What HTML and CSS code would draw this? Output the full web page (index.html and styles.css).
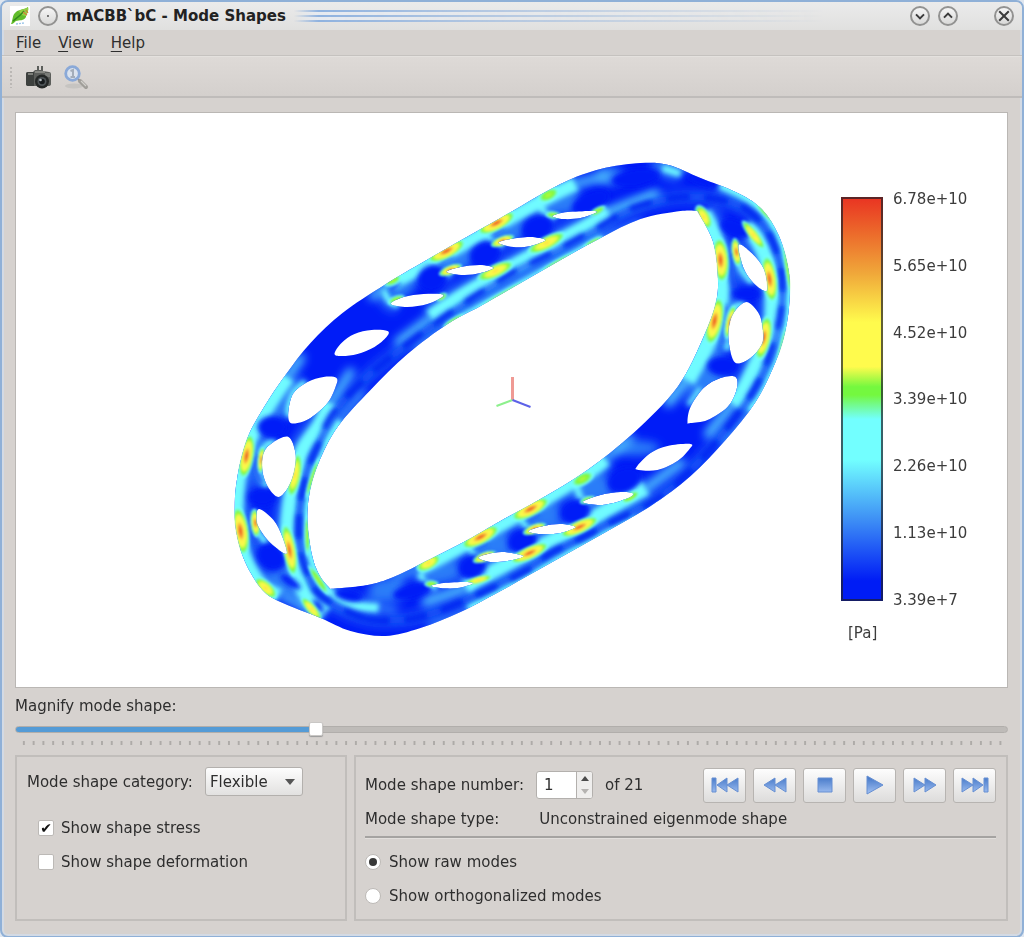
FILE: index.html
```html
<!DOCTYPE html>
<html lang="en">
<head>
<meta charset="utf-8">
<title>mACBB`bC - Mode Shapes</title>
<link rel="stylesheet" href="styles.css">
</head>
<body>
<div class="window">
  <header class="titlebar">
    <svg class="app-icon" viewBox="0 0 20 20" aria-hidden="true">
      <rect width="20" height="20" fill="#fff"/>
      <path d="M1 18C3 14 2 9 6 6C9 3 14 4 18 1C19 6 16 8 16 11C14 15 9 14 6 15C4 16 4 18 1 18Z" fill="#62bd2c"/>
      <path d="M9 5C12 3 16 3 18 1C19 5 17 7 16 10C13 10 10 8 9 5Z" fill="#93cf45"/>
      <path d="M3 15C7 12 10 10 14 5" fill="none" stroke="#2f8a1c" stroke-width="1.3"/>
      <path d="M13 6L17 9M16 4L18 7" stroke="#d0803a" stroke-width="1.2"/>
      <path d="M6 18L14 17" stroke="#9fc8ea" stroke-width="1.4" stroke-dasharray="2 1"/>
    </svg>
    <button class="round" type="button" aria-label="Window menu"><svg viewBox="0 0 20 20"><circle cx="10" cy="10" r="1.3" fill="#555"/></svg></button>
    <h1 class="title">mACBB`bC - Mode Shapes</h1>
    <span class="stripes"></span>
    <button class="round" type="button" aria-label="Minimize"><svg viewBox="0 0 20 20"><path d="M5 8L10 13L15 8" class="glyph"/></svg></button>
    <button class="round" type="button" aria-label="Maximize"><svg viewBox="0 0 20 20"><path d="M5 12L10 7L15 12" class="glyph"/></svg></button>
    <button class="round close" type="button" aria-label="Close"><svg viewBox="0 0 20 20"><path d="M4 4L16 16M16 4L4 16" class="glyph"/></svg></button>
  </header>

  <nav class="menubar">
    <button type="button"><u>F</u>ile</button>
    <button type="button"><u>V</u>iew</button>
    <button type="button"><u>H</u>elp</button>
  </nav>

  <div class="toolbar">
    <span class="grip"></span>
    <button type="button" aria-label="Take snapshot">
      <svg width="26" height="26" viewBox="0 0 26 26">
        <path d="M1 10Q1 8 3 8H8L10 6H12V2H14V6H16V2H18V7L24 8Q26 8 26 10V20Q26 22 23 22H4Q1 22 1 20Z" fill="#5c5e5b"/>
        <path d="M1 10Q1 8 3 8H9V22H4Q1 22 1 20Z" fill="#3d403e"/>
        <path d="M3 10H8M10 8H20" stroke="#92948f" stroke-width="1.500"/>
        <rect x="20" y="9" width="5" height="4" fill="#7b7d79"/>
        <circle cx="17" cy="17.500" r="7" fill="#252827"/>
        <circle cx="17" cy="17.500" r="4.500" fill="#4e5457"/>
        <circle cx="17" cy="17.500" r="2.800" fill="#161a1c"/>
        <circle cx="15.500" cy="16" r="1.300" fill="#b4bcc0"/>
      </svg>
    </button>
    <button type="button" aria-label="Zoom to original size">
      <svg width="26" height="26" viewBox="0 0 26 26">
        <ellipse cx="11" cy="22" rx="9" ry="2.500" fill="#c6c4c1"/>
        <path d="M15 15L18 18" stroke="#888" stroke-width="2"/>
        <path d="M17 17L23 23" stroke="#a09e99" stroke-width="4" stroke-linecap="round"/>
        <path d="M18 17L23 22" stroke="#d2d0cc" stroke-width="1.300"/>
        <circle cx="9.500" cy="9.500" r="6.800" fill="#dbe3ee" stroke="#8aa9d8" stroke-width="2.800"/>
        <path d="M7.500 7L10 6V13M7.500 13H12" fill="none" stroke="#a3adba" stroke-width="2"/>
      </svg>
    </button>
  </div>

  <main class="content">
    <section class="viewport">
      <svg class="model" viewBox="16 113 814 574" role="img" aria-label="Stress on deformed ring">
        <defs>
          <clipPath id="body"><path id="outline" clip-rule="evenodd"/></clipPath>
          <filter id="soft" x="-20%" y="-20%" width="140%" height="140%"><feGaussianBlur stdDeviation="2.500"/></filter>
          <filter id="wide" x="-20%" y="-20%" width="140%" height="140%"><feGaussianBlur stdDeviation="5"/></filter>
          <filter id="slight" x="-20%" y="-20%" width="140%" height="140%"><feGaussianBlur stdDeviation="0.800"/></filter>
          <radialGradient id="red">
            <stop offset="0" stop-color="#ee4a22"/><stop offset=".2" stop-color="#f39232"/>
            <stop offset=".38" stop-color="#fdf54a"/><stop offset=".58" stop-color="#f4fb4c"/>
            <stop offset=".74" stop-color="#7cf83c"/><stop offset=".9" stop-color="#72ffff" stop-opacity=".9"/>
            <stop offset="1" stop-color="#72ffff" stop-opacity="0"/>
          </radialGradient>
          <radialGradient id="yellow">
            <stop offset="0" stop-color="#fbd63f"/><stop offset=".25" stop-color="#fff94b"/>
            <stop offset=".5" stop-color="#e8fb4a"/><stop offset=".7" stop-color="#7cf83c"/>
            <stop offset=".9" stop-color="#72ffff" stop-opacity=".9"/><stop offset="1" stop-color="#72ffff" stop-opacity="0"/>
          </radialGradient>
          <radialGradient id="green">
            <stop offset="0" stop-color="#b9f83c"/><stop offset=".5" stop-color="#7cf83c"/>
            <stop offset=".8" stop-color="#72ffff" stop-opacity=".9"/><stop offset="1" stop-color="#72ffff" stop-opacity="0"/>
          </radialGradient>
        </defs>
        <g clip-path="url(#body)">
          <rect x="220" y="150" width="590" height="500" fill="#001cf7"/>
          <g id="haze" class="haze" filter="url(#wide)"></g>
          <g id="fade" class="fade" filter="url(#wide)"></g>
          <g id="cyan" class="cyan" filter="url(#soft)"></g>
          <g id="dark" filter="url(#soft)"></g>
          <g id="spots" filter="url(#slight)"></g>
        </g>
        <path d="M512 377V401" stroke="#ef9a94" stroke-width="3"/>
        <path d="M512 400L496 406" stroke="#8df08d" stroke-width="2"/>
        <path d="M512 400L530 407" stroke="#5d62e8" stroke-width="2"/>
      </svg>
      <div class="legend">
        <div class="scale"></div>
        <ol class="values">
          <li>6.78e+10</li><li>5.65e+10</li><li>4.52e+10</li><li>3.39e+10</li><li>2.26e+10</li><li>1.13e+10</li><li>3.39e+7</li>
        </ol>
        <span class="unit">[Pa]</span>
      </div>
    </section>

    <label class="magnify" for="magnify">Magnify mode shape:</label>
    <input class="slider" id="magnify" type="range" min="0" max="100" value="30">
    <div class="ticks"></div>

    <div class="panels">
      <section class="panel category">
        <div class="row">
          <label for="category">Mode shape category:</label>
          <span class="select">
            <select id="category"><option>Flexible</option><option>Rigid</option></select>
            <svg class="arrow" width="10" height="6" viewBox="0 0 10 6"><path d="M0 0H10L5 6Z" fill="#555"/></svg>
          </span>
        </div>
        <label class="check"><input type="checkbox" checked>Show shape stress</label>
        <label class="check"><input type="checkbox">Show shape deformation</label>
      </section>

      <section class="panel shape">
        <div class="row player">
          <label for="number">Mode shape number:</label>
          <span class="spin">
            <input id="number" type="number" min="1" max="21" value="1">
            <span class="steps">
              <button type="button" aria-label="Next mode"><svg width="8" height="5" viewBox="0 0 8 5"><path d="M0 5H8L4 0Z" fill="#4b4b4b"/></svg></button>
              <button type="button" aria-label="Previous mode"><svg width="8" height="5" viewBox="0 0 8 5"><path d="M0 0H8L4 5Z" fill="#b5b3b1"/></svg></button>
            </span>
          </span>
          <span>of 21</span>
          <div class="buttons">
            <button type="button" aria-label="First"><svg viewBox="0 0 28 20"><defs><linearGradient id="ink" gradientUnits="userSpaceOnUse" x1="0" y1="2" x2="0" y2="18"><stop offset="0" stop-color="#4578c8"/><stop offset="1" stop-color="#9dbdf0"/></linearGradient></defs><path class="ink" d="M1 3H5V17H1ZM16 3V17L6 10ZM27 3V17L16 10Z"/></svg></button>
            <button type="button" aria-label="Rewind"><svg viewBox="0 0 28 20"><path class="ink" d="M14 3V17L3 10ZM25 3V17L14 10Z"/></svg></button>
            <button type="button" aria-label="Stop"><svg viewBox="0 0 28 20"><path class="ink" d="M7 3H21V17H7Z"/></svg></button>
            <button type="button" aria-label="Play"><svg viewBox="0 0 28 20"><path class="ink" d="M6 1V19L22 10Z"/></svg></button>
            <button type="button" aria-label="Forward"><svg viewBox="0 0 28 20"><path class="ink" d="M3 3V17L14 10ZM14 3V17L25 10Z"/></svg></button>
            <button type="button" aria-label="Last"><svg viewBox="0 0 28 20"><path class="ink" d="M1 3V17L12 10ZM12 3V17L22 10ZM23 3H27V17H23Z"/></svg></button>
          </div>
        </div>
        <div class="row type"><span>Mode shape type:</span><span>Unconstrained eigenmode shape</span></div>
        <hr>
        <label class="radio"><input type="radio" name="modes" checked>Show raw modes</label>
        <label class="radio"><input type="radio" name="modes">Show orthogonalized modes</label>
      </section>
    </div>
  </main>
</div>
<script src="model.js"></script>
</body>
</html>
```
FILE: styles.css
```css
* { box-sizing: border-box; }
body {
  margin: 0;
  background: #dfe6ef;
  color: #2e2e2e;
  font: 15px/18px "DejaVu Sans", sans-serif;
}
button, input, select { font: inherit; color: inherit; margin: 0; }
button { padding: 0; border: 0; background: none; }
svg { display: block; }

.window {
  display: flex;
  flex-direction: column;
  min-height: 100vh;
  border: 2px solid #8fb0d7;
  border-radius: 8px;
  box-shadow: inset 0 0 0 2px #d3dae4;
  background: #d6d2cf;
  overflow: hidden;
}

.titlebar {
  display: flex;
  align-items: center;
  height: 28px;
  gap: 8px;
  padding: 0 8px;
  background: linear-gradient(#ebebeb, #e0e0df);
}
.app-icon { width: 20px; height: 20px; }
.round {
  width: 20px;
  height: 20px;
  border: 2px solid #929291;
  border-radius: 50%;
  background: linear-gradient(#f5f5f5, #d9d9d8);
  flex: none;
}
.round svg { width: 100%; height: 100%; }
.round.close { margin-left: 28px; }
.glyph { fill: none; stroke: #3b3b3b; stroke-width: 2.5; }
.title { margin: 0; font-size: 15px; line-height: 18px; font-weight: bold; color: #222; white-space: nowrap; }
.stripes {
  flex: 1;
  height: 12px;
  margin-right: 4px;
  background: repeating-linear-gradient(#8fb2df 0 2px, #e6eaf0 2px 5px);
  mask-image: linear-gradient(90deg, transparent, #000 4%, rgba(0, 0, 0, .6) 30%, transparent 88%);
}

.menubar {
  display: flex;
  gap: 17px;
  height: 26px;
  padding: 0 14px;
  border-bottom: 1px solid #c5c2bf;
}
.menubar u { text-underline-offset: 3px; }

.toolbar {
  display: flex;
  align-items: center;
  gap: 12px;
  height: 42px;
  padding: 0 7px;
  border-top: 1px solid #e4e1de;
  border-bottom: 2px solid #bfbcba;
  background: linear-gradient(#dedad7, #d4d0cd);
}
.grip { width: 4px; height: 22px; background: radial-gradient(circle, #bbb8b5 1px, transparent 1px) 0 0 / 4px 4px; }

.content { display: flex; flex: 1; flex-direction: column; padding: 14px 14px 15px 13px; }

.viewport {
  display: flex;
  flex: 1;
  min-height: 320px;
  border: 1px solid #bab7b4;
  background: #fff;
}
.model { flex: 1; min-width: 0; height: 574px; }
.legend {
  display: grid;
  grid-template-columns: 42px 96px;
  grid-template-rows: 404px 20px;
  column-gap: 10px;
  row-gap: 23px;
  padding: 84px 18px 0 10px;
  color: #3c3c3c;
}
.scale {
  border: 2px solid rgba(30, 30, 40, .7);
  background: linear-gradient(#e93322, #ec6a2b 9%, #f0a83a 19%, #fffb4d 31%, #fffb4d 42%, #74f83f 47%, #74f83f 49%, #72ffff 55%, #72ffff 65%, #3d8ef5 80%, #001cf5 95%) border-box;
}
.values {
  display: flex;
  flex-direction: column;
  justify-content: space-between;
  margin: -7px 0 -8px;
  padding: 0;
  list-style: none;
}
.unit { padding-left: 7px; }

.magnify { margin-top: 9px; }
.slider {
  appearance: none;
  width: 100%;
  height: 16px;
  margin-top: 6px;
  background: none;
}
.slider::-webkit-slider-runnable-track {
  height: 7px;
  border: 1px solid #b1aeab;
  border-radius: 4px;
  background: linear-gradient(90deg, #549bd6 30%, #bebbb8 30%) border-box;
}
.slider::-webkit-slider-thumb {
  appearance: none;
  width: 14px;
  height: 14px;
  margin-top: -5px;
  border: 1px solid #c9c7c5;
  border-radius: 2px;
  background: #fff;
  box-shadow: 0 1px 1px #999;
}
.ticks {
  height: 4px;
  margin: 4px 3px 10px;
  background: linear-gradient(90deg, transparent 50%, #aeaba8 50% 70%, transparent 70%) 0 0 / calc(100% / 101) 100%;
}

.panels { display: grid; grid-template-columns: 332px 1fr; gap: 7px; }
.panel { min-height: 166px; border: 2px solid #c1bebb; }
.row { display: flex; align-items: center; gap: 12px; }
.category { padding: 10px; }
.category .row { margin-bottom: 23px; }
.select { position: relative; }
.select select {
  appearance: none;
  width: 98px;
  height: 29px;
  padding: 0 4px;
  border: 1px solid #b3b0ad;
  border-radius: 3px;
  background: linear-gradient(#fdfdfd, #e2e1e0);
}
.arrow { position: absolute; right: 8px; top: 12px; pointer-events: none; }
.check { display: flex; align-items: center; gap: 7px; height: 18px; margin: 0 0 16px 11px; }
.check input, .radio input {
  appearance: none;
  display: grid;
  place-items: center;
  width: 16px;
  height: 16px;
  border: 1px solid #bcb9b6;
  border-radius: 2px;
  background: #fff;
}
.check input:checked::after { content: "✔"; color: #111; font-size: 14px; line-height: 14px; }

.shape { padding: 11px 10px 0 9px; }
.player { height: 34px; }
.spin {
  display: flex;
  height: 28px;
  border: 1px solid #b3b0ad;
  border-radius: 3px;
  background: #fff;
  overflow: hidden;
}
.spin input { width: 39px; padding: 0 7px; border: 0; background: none; appearance: textfield; }
.spin input::-webkit-inner-spin-button { display: none; }
.steps { display: grid; width: 16px; border-left: 1px solid #b3b0ad; background: #efeeed; }
.steps button { display: grid; place-items: center; }
.buttons { display: flex; gap: 7px; margin-left: auto; }
.buttons button {
  display: grid;
  place-items: center;
  width: 43px;
  height: 35px;
  border: 1px solid #b7b4b1;
  border-radius: 3px;
  background: linear-gradient(#fdfdfd, #dddcdb);
}
.buttons svg { width: 28px; height: 20px; }
.ink { fill: url(#ink); stroke: #668fd2; stroke-width: 1; }
.type { gap: 40px; margin: 8px 0; }
.shape hr { margin: 0 0 14px; border: 0; border-top: 2px solid #a5a3a1; border-bottom: 1px solid #e2dfdc; }
.radio { display: flex; align-items: center; gap: 8px; height: 18px; }
.radio + .radio { margin: 16px 0 14px; }
.radio input { border-radius: 50%; }
.radio input:checked::after { content: ""; width: 8px; height: 8px; border-radius: 50%; background: #383838; }

.haze { fill: #2b7df8; stroke: #2b7df8; }
.haze path { fill: none; }
.fade { fill: none; stroke: #55cdfc; stroke-linecap: round; }
.cyan { fill: none; stroke: #70fbff; }
```
FILE: model.js
```js
const NS = "http://www.w3.org/2000/svg";

function pairs(text) {
  return text.trim().split(/\s+/).map(p => p.split(",").map(Number));
}

// Catmull-Rom spline through the points, as a cubic path.
function spline(text, closed) {
  const p = pairs(text);
  const n = p.length;
  const at = i => closed ? p[(i + n) % n] : p[Math.max(0, Math.min(n - 1, i))];
  let d = "M" + p[0];
  for (let i = 0; i < (closed ? n : n - 1); i++) {
    const [a, b, c, e] = [at(i - 1), at(i), at(i + 1), at(i + 2)];
    d += `C${b[0] + (c[0] - a[0]) / 6},${b[1] + (c[1] - a[1]) / 6} ${c[0] - (e[0] - b[0]) / 6},${c[1] - (e[1] - b[1]) / 6} ${c}`;
  }
  return closed ? d + "Z" : d;
}

function add(parent, tag, attrs) {
  const el = document.createElementNS(NS, tag);
  for (const key in attrs) el.setAttribute(key, attrs[key]);
  document.getElementById(parent).append(el);
}

const loops = [
  "234,510 237,476 247,438 263,408 285,375 310,343 342,313 384,285 440,252 500,218 560,184 600,169 640,163 668,165 700,178 735,192 760,208 778,235 788,270 789,300 785,330 775,362 755,402 725,440 690,476 650,506 600,535 550,563 500,591 460,612 420,628 385,636 350,631 320,618 280,602 262,590 246,565 237,538",
  "289,422 288,410 293,393 307,382 323,377 336,378 335,387 327,403 310,418 297,423",
  "334,354 341,343 354,334 371,330 387,331 386,337 374,347 357,354 342,356",
  "288,437 295,453 294,470 288,487 278,497 268,488 262,472 263,453 273,442",
  "259,509 273,520 282,537 286,554 270,543 258,527 256,516",
  "390,304 403,297 423,294 440,294 442,297 427,304 407,307",
  "446,272 460,267 480,265 493,268 480,273 463,275",
  "498,243 510,239 530,237 545,240 530,246 513,247",
  "552,216 567,212 593,211 595,213 580,218 563,219",
  "430,586 443,583 467,582 472,584 457,588 440,588",
  "478,558 487,554 503,552 523,556 507,561 490,562",
  "528,531 543,526 560,524 575,527 560,533 540,534",
  "582,502 600,495 620,492 632,493 630,497 613,503 597,505",
  "636,467 650,453 667,446 690,444 689,449 677,461 657,470 638,470",
  "687,422 690,407 703,388 720,378 735,377 736,390 727,407 707,420 690,423",
  "735,363 729,347 728,330 733,313 746,302 758,313 762,327 762,343 750,358",
  "738,245 750,252 763,268 767,287 764,291 753,283 743,268",
];
// The central opening keeps its two sharp corners, so it is built from two open curves.
const opening =
  spline("330,589 367,585 393,577 430,559 467,540 500,521 540,499 587,470 633,433 677,387 703,337 716,300 717,270 712,240 697,211") +
  spline("697,211 680,211 640,219 600,238 560,260 520,283 480,306 447,324 407,354 370,390 337,427 318,463 309,493 307,523 312,557 320,577 330,589").replace(/^M[^C]*/, "") + "Z";
document.getElementById("outline").setAttribute("d", loops.map(l => spline(l, true)).join("") + opening);

const rim = "363,618 323,598 308,577 299,547 299,510 305,477 317,447 333,413 372,372 430,327 470,299 497,282 520,268 547,255 597,228 633,208 683,197 733,203 760,222 773,243 781,273 781,307 773,343 757,383 733,420 700,460 660,497 610,523 583,537 550,553 527,570 483,592 433,613 400,620";
add("haze", "path", { d: spline(rim, true), "stroke-width": 14, opacity: .5 });

for (const [x, y, rx, ry] of [
  [400, 283, 14, 14], [455, 257, 18, 14], [506, 230, 18, 14], [560, 201, 20, 13], [610, 176, 14, 9],
  [270, 400, 14, 30], [285, 583, 22, 14], [670, 166, 20, 8], [388, 590, 20, 12],
  [705, 370, 22, 26], [635, 448, 24, 7], [592, 487, 18, 14], [542, 514, 18, 14], [492, 543, 18, 14], [442, 571, 18, 12],
]) add("haze", "ellipse", { cx: x, cy: y, rx, ry });

for (const [points, width] of [
  ["300,358 287,377", 9], ["372,296 392,283", 8], ["575,184 605,176", 8], ["686,380 668,402", 10], ["630,438 605,459", 7],
  ["350,372 330,403", 8], ["398,342 430,318", 8], ["606,213 655,194", 9], ["732,404 708,434", 9], ["645,489 680,463", 9],
  ["465,588 425,602", 9], ["378,608 395,610", 4], ["602,239 640,223", 5], ["750,412 722,444", 5], ["668,499 635,519", 6], ["468,612 430,626", 5],
  ["283,597 320,614", 6], ["418,568 395,577", 6], ["362,392 340,421", 5], ["415,348 447,327", 5],
]) add("fade", "path", { d: spline(points), "stroke-width": width });

for (const [points, width] of [
  ["287,377 265,410 247,445 238,480 236,515 243,555 260,585 278,596", 15],
  ["392,283 445,254 495,226 550,196 575,184", 14],
  ["702,213 714,240 720,280 716,320 703,350 686,380", 18],
  ["605,459 590,471 530,508 480,536 430,563 418,568", 14],
  ["330,403 319,425 302,450 294,480 289,505 287,535 293,560 304,593 325,612", 15],
  ["430,317 450,303 490,279 540,251 590,224 608,212", 15],
  ["745,226 757,240 768,265 772,290 770,330 757,362 740,395 732,404", 16],
  ["645,488 620,502 575,528 525,554 475,581 465,587", 15],
  ["340,421 320,455 310,488 307,525 311,560 324,587 350,604 378,608", 9],
  ["447,327 500,297 560,263 602,239", 10],
  ["720,184 745,196 768,215 786,255 790,290 784,345 766,388 750,412", 11],
  ["635,518 590,543 540,571 490,598 468,610", 10],
  ["384,290 388,300 398,306", 6], ["436,260 438,270 450,275", 6], ["488,232 491,242 502,246", 6], ["542,203 543,212 554,218", 6],
  ["419,573 424,582 436,588", 6], ["470,546 474,556 484,561", 6], ["522,518 526,528 536,533", 6], ["577,487 580,498 590,504", 6],
  ["289,417 288,408 294,392 305,382", 6], ["266,488 259,470 262,450 274,440", 6], ["266,543 254,528 254,512", 6],
  ["727,350 725,328 732,310 744,302", 6], ["752,283 739,266 735,246", 6], ["688,405 700,388", 4],
  ["662,168 680,174", 7],
]) {
  add("haze", "path", { d: spline(points), "stroke-width": width + 12, opacity: .75 });
  add("cyan", "path", { d: spline(points), "stroke-width": width });
}

add("dark", "path", { d: spline(rim, true), fill: "none", stroke: "#1450f6", "stroke-width": 6, opacity: .7 });
add("dark", "path", { d: spline(rim, true), fill: "none", stroke: "#0422f2", "stroke-width": 7, "stroke-dasharray": "18 20", "stroke-linecap": "round", opacity: .9 });
for (const [x, y, rx, ry, turn] of [
  [432, 278, 15, 13, -25], [485, 254, 16, 12, -25], [537, 228, 16, 12, -25], [590, 202, 20, 10, -25],
  [272, 427, 15, 11, 0], [262, 497, 14, 9, 0], [271, 557, 15, 12, 30], [290, 582, 12, 4, 35],
  [735, 229, 16, 9, 25], [746, 294, 14, 7, 0], [722, 366, 15, 10, 0],
  [472, 567, 14, 12, -25], [522, 541, 15, 12, -25], [575, 512, 15, 12, -25], [624, 480, 17, 12, -25], [412, 591, 20, 8, -15], [348, 595, 14, 6, 10], [318, 606, 8, 3, 50],
  [700, 181, 14, 3, 20], [635, 178, 24, 9, -8],
]) add("dark", "ellipse", { cx: x, cy: y, rx, ry, fill: "#001cf7", transform: `rotate(${turn} ${x} ${y})` });
for (const d of [
  "M257 455Q252 470 262 484", "M249 512Q245 530 258 545", "M731 250Q728 270 734 288", "M727 305Q719 325 723 345",
  "M440 264Q444 258 452 256", "M492 236Q496 230 504 228", "M389 292Q393 286 400 284", "M474 549Q478 543 486 542", "M526 521Q530 515 538 514",
]) add("dark", "path", { d, fill: "none", stroke: "#1448f4", "stroke-width": 4 });

const spots = {
  red: [
    [446, 251, 22, 8, -28], [496, 223, 22, 8, -28], [450, 270, 13, 5, -22], [502, 241, 13, 5, -22],
    [246, 456, 8, 24, 10], [261, 460, 4, 14, 5], [240, 531, 9, 26, -8], [255, 523, 5, 15, -5], [289, 550, 7, 28, -10],
    [720, 260, 9, 24, -4], [714, 321, 9, 26, 12], [736, 252, 5, 15, -8], [769, 279, 8, 25, -8], [763, 338, 8, 24, 12], [730, 322, 5, 18, 12],
    [480, 537, 22, 8, -28], [530, 509, 22, 8, -28], [484, 557, 13, 5, -22], [534, 529, 13, 5, -22],
    [529, 553, 22, 7, -25], [579, 527, 22, 7, -25],
  ],
  yellow: [
    [495, 271, 21, 7, -25], [546, 243, 22, 7, -27], [294, 475, 7, 24, 10], [265, 588, 15, 7, 42], [311, 609, 5, 16, -40],
    [703, 217, 7, 14, -28], [753, 235, 5, 19, -38], [428, 563, 14, 7, -30], [478, 580, 15, 4, -15], [583, 550, 24, 4, -28],
  ],
  green: [
    [392, 280, 11, 6, -28], [548, 195, 13, 7, -28], [396, 300, 10, 5, -22], [553, 215, 9, 4, 5], [597, 211, 10, 4, -30], [441, 297, 7, 4, -30],
    [505, 294, 36, 4, -29], [558, 263, 24, 4, -29], [593, 242, 12, 3, -27], [453, 321, 14, 3, -32],
    [307, 535, 3, 24, 0], [318, 580, 4, 20, -34], [312, 478, 3, 24, 18], [788, 268, 4, 36, -8], [783, 346, 4, 28, 14], [767, 214, 4, 20, -45],
    [582, 479, 14, 7, -28], [431, 584, 8, 4, 0], [587, 500, 9, 4, -20], [630, 497, 12, 5, -30], [533, 578, 24, 4, -28],
  ],
};
for (const level in spots) {
  for (const [x, y, rx, ry, turn] of spots[level]) {
    add("spots", "ellipse", { cx: x, cy: y, rx, ry, fill: `url(#${level})`, transform: `rotate(${turn} ${x} ${y})` });
  }
}
```
